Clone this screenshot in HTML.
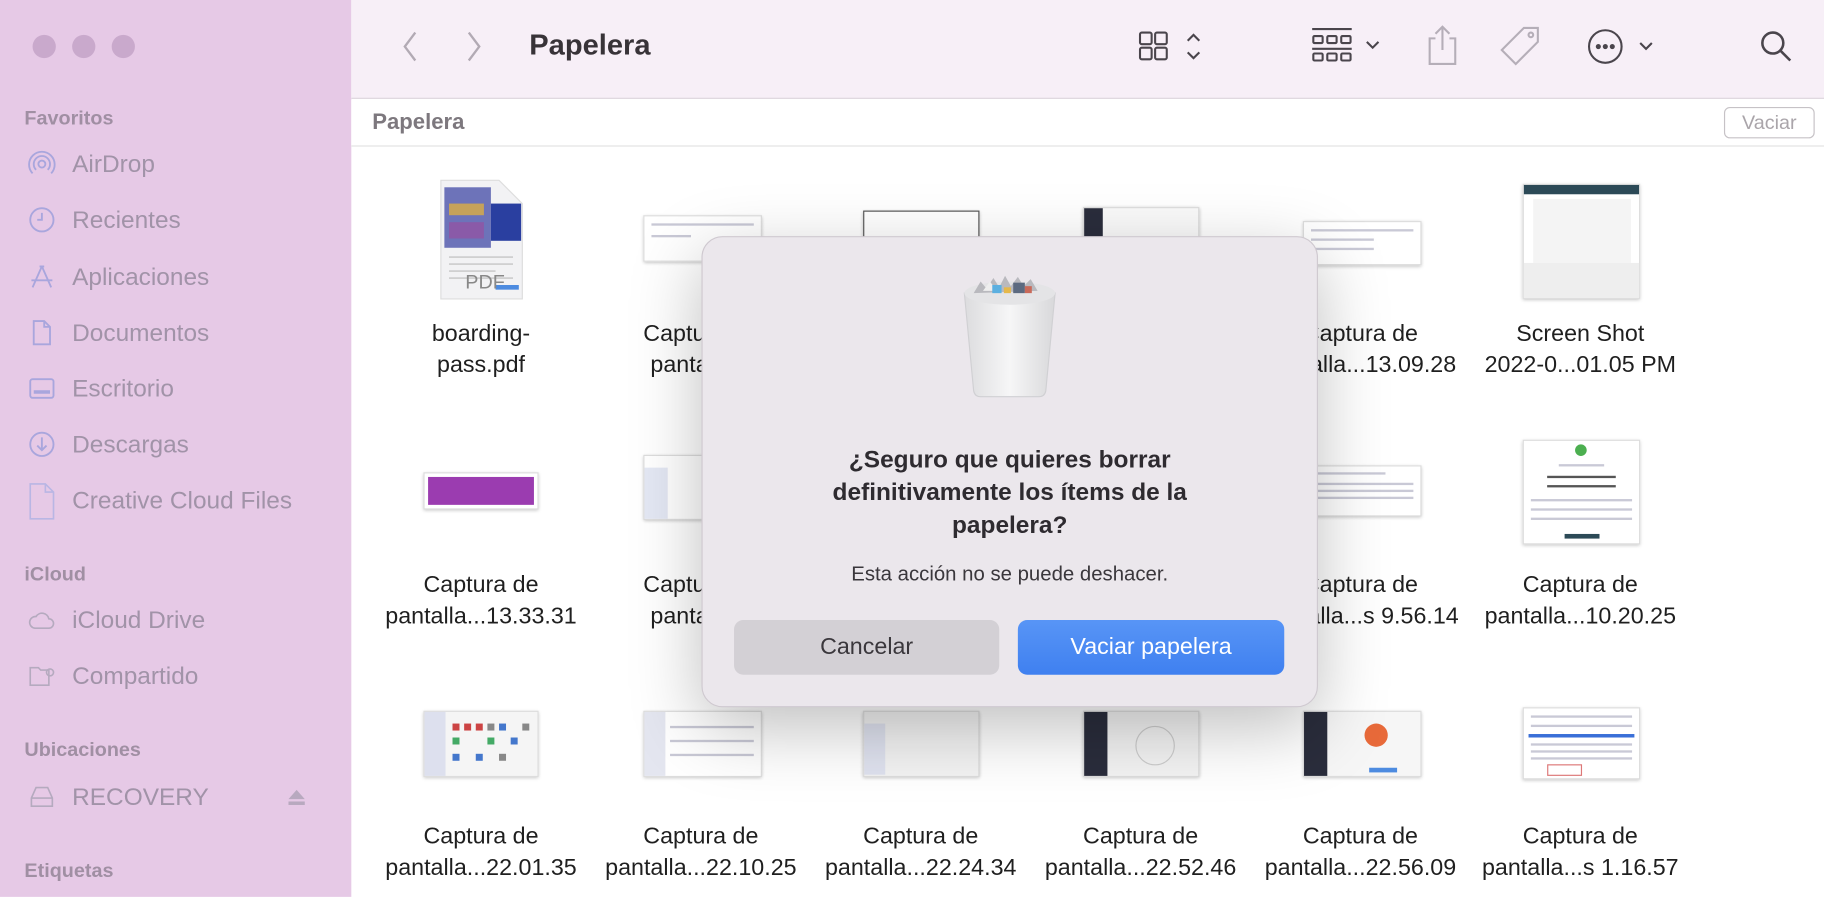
<!DOCTYPE html>
<html><head><meta charset="utf-8"><style>
*{margin:0;padding:0;box-sizing:border-box}
html,body{width:1824px;height:896px;overflow:hidden;background:#fff;font-family:"Liberation Sans",sans-serif}
#w{position:absolute;left:0;top:0;width:1568px;height:771px;transform:scale(1.16327);transform-origin:0 0}
.a{position:absolute}
#side{left:0;top:0;width:302px;height:771px;background:#e6c9e6}
.tl{width:20px;height:20px;border-radius:50%;background:#c9a9cc;top:30px}
.hd{left:21px;font-size:17px;font-weight:bold;color:#a08fa3}
.it{left:62px;font-size:21px;color:#a193a8;line-height:24px}
.ic{left:24px;width:24px;height:24px}
#tb{left:302px;top:0;width:1266px;height:85px;background:#f7eff7;border-bottom:1px solid #ddd5dd}
#pb{left:302px;top:86px;width:1266px;height:40px;background:#fff;border-bottom:1px solid #e2e2e2}
.lbl{font-size:20px;color:#1f1f1f;text-align:center;width:189px;line-height:27px}
.th{background:#fff;border:1px solid #ddd;box-shadow:0 1px 3px rgba(0,0,0,.25)}
.th i{position:absolute;left:6%;right:6%;height:2px;background:#c9c9d6}
</style></head><body><div id="w">
<div id="side" class="a">
<div class="a tl" style="left:28px"></div><div class="a tl" style="left:62px"></div><div class="a tl" style="left:96px"></div>
<div class="a hd" style="top:92px">Favoritos</div>
<svg class="a ic" style="top:129px" viewBox="0 0 24 24" fill="none" stroke="#a9a6dd" stroke-width="1.6"><circle cx="12" cy="12" r="3"/><path d="M7 17a7 7 0 1 1 10 0M4 20a11 11 0 1 1 16 0"/></svg>
<div class="a it" style="top:130px">AirDrop</div>
<svg class="a ic" style="top:177px" viewBox="0 0 24 24" fill="none" stroke="#a9a6dd" stroke-width="1.6"><circle cx="12" cy="12" r="10"/><path d="M12 6v6H8"/></svg>
<div class="a it" style="top:178px">Recientes</div>
<svg class="a ic" style="top:226px" viewBox="0 0 24 24" fill="none" stroke="#a9a6dd" stroke-width="1.6"><path d="M12 3L4 21M12 3l8 18M3 15h18M10 3h4"/></svg>
<div class="a it" style="top:227px">Aplicaciones</div>
<svg class="a ic" style="top:274px" viewBox="0 0 24 24" fill="none" stroke="#a9a6dd" stroke-width="1.6"><path d="M5 2h9l5 5v15H5zM14 2v5h5"/></svg>
<div class="a it" style="top:275px">Documentos</div>
<svg class="a ic" style="top:322px" viewBox="0 0 24 24" fill="none" stroke="#a9a6dd" stroke-width="1.6"><rect x="2" y="4" width="20" height="16" rx="2"/><path d="M5 15h14" stroke-width="3"/></svg>
<div class="a it" style="top:323px">Escritorio</div>
<svg class="a ic" style="top:370px" viewBox="0 0 24 24" fill="none" stroke="#a9a6dd" stroke-width="1.6"><circle cx="12" cy="12" r="10"/><path d="M12 6v11M8 13l4 4 4-4"/></svg>
<div class="a it" style="top:371px">Descargas</div>
<svg class="a ic" style="top:415px;height:32px" viewBox="0 0 24 32" fill="none" stroke="#b9b6e4" stroke-width="1.4"><path d="M2 1h13l7 7v23H2zM15 1v7h7"/></svg>
<div class="a it" style="top:419px">Creative Cloud Files</div>
<div class="a hd" style="top:484px">iCloud</div>
<svg class="a ic" style="top:521px" viewBox="0 0 24 24" fill="none" stroke="#b5aabf" stroke-width="1.4"><path d="M6 19h12a4 4 0 0 0 0-8 6 6 0 0 0-11-2A5 5 0 0 0 6 19z"/></svg>
<div class="a it" style="top:522px">iCloud Drive</div>
<svg class="a ic" style="top:569px" viewBox="0 0 24 24" fill="none" stroke="#b5aabf" stroke-width="1.4"><path d="M2 5h7l2 2h7v13H2z"/><circle cx="19" cy="9" r="3"/></svg>
<div class="a it" style="top:570px">Compartido</div>
<div class="a hd" style="top:635px">Ubicaciones</div>
<svg class="a ic" style="top:673px" viewBox="0 0 24 24" fill="none" stroke="#b5aabf" stroke-width="1.4"><path d="M3 13l4-9h10l4 9v7H3zM3 13h18"/></svg>
<div class="a it" style="top:674px">RECOVERY</div>
<svg class="a" style="left:247px;top:677px" width="16" height="16" viewBox="0 0 16 16" fill="#b8a9bf"><path d="M8 2l7 8H1z"/><rect x="1" y="12" width="14" height="3"/></svg>
<div class="a hd" style="top:739px">Etiquetas</div>
</div>

<div id="tb" class="a"></div>
<svg class="a" style="left:340px;top:26px" width="80" height="28" viewBox="0 0 80 28" fill="none" stroke="#b2aab4" stroke-width="2"><path d="M17 2L8 14l9 12M63 2l9 12-9 12"/></svg>
<div class="a" style="left:455px;top:25px;font-size:25px;font-weight:bold;color:#383338">Papelera</div>
<svg class="a" style="left:978px;top:26px" width="60" height="28" viewBox="0 0 60 28" fill="none" stroke="#4a454c" stroke-width="1.8"><rect x="2" y="2" width="10" height="10" rx="1.5"/><rect x="15" y="2" width="10" height="10" rx="1.5"/><rect x="2" y="15" width="10" height="10" rx="1.5"/><rect x="15" y="15" width="10" height="10" rx="1.5"/><path d="M43 9l5-5 5 5M43 19l5 5 5-5"/></svg>
<svg class="a" style="left:1126px;top:22px" width="70" height="34" viewBox="0 0 70 34" fill="none" stroke="#4a454c" stroke-width="1.8"><path d="M2 3h34"/><rect x="3" y="9" width="8" height="6" rx="1"/><rect x="15" y="9" width="8" height="6" rx="1"/><rect x="27" y="9" width="8" height="6" rx="1"/><path d="M2 20h34"/><rect x="3" y="24" width="8" height="6" rx="1"/><rect x="15" y="24" width="8" height="6" rx="1"/><rect x="27" y="24" width="8" height="6" rx="1"/><path d="M49 14l5 5 5-5"/></svg>
<svg class="a" style="left:1225px;top:21px" width="30" height="36" viewBox="0 0 30 36" fill="none" stroke="#b5aeb8" stroke-width="1.8"><path d="M9 12H4v22h22V12h-5M15 2v20M9 8l6-6 6 6"/></svg>
<svg class="a" style="left:1288px;top:21px" width="38" height="38" viewBox="0 0 38 38" fill="none" stroke="#b5aeb8" stroke-width="1.8"><path d="M22 3h12v12L15 34 3 22z"/><circle cx="28" cy="9" r="2"/></svg>
<svg class="a" style="left:1364px;top:24px" width="64" height="32" viewBox="0 0 64 32" fill="none" stroke="#4a454c" stroke-width="1.8"><circle cx="16" cy="16" r="14"/><circle cx="10" cy="16" r="1.3" fill="#4a454c"/><circle cx="16" cy="16" r="1.3" fill="#4a454c"/><circle cx="22" cy="16" r="1.3" fill="#4a454c"/><path d="M46 13l5 5 5-5"/></svg>
<svg class="a" style="left:1512px;top:25px" width="30" height="30" viewBox="0 0 30 30" fill="none" stroke="#4a454c" stroke-width="2.2"><circle cx="12" cy="12" r="9"/><path d="M19 19l8 8"/></svg>

<div id="pb" class="a"></div>
<div class="a" style="left:320px;top:95px;font-size:19px;font-weight:bold;color:#7d787e">Papelera</div>
<div class="a" style="left:1482px;top:92px;width:78px;height:27px;border:1px solid #c6c2c6;border-radius:5px;font-size:17px;color:#aaa5aa;text-align:center;line-height:25px">Vaciar</div>

<svg class="a" style="left:376px;top:153px" width="76" height="106" viewBox="0 0 76 106"><path d="M3 2h50l20 20v82H3z" fill="#f2f2f4" stroke="#ddd"/><rect x="6" y="8" width="40" height="52" fill="#6d73b9"/><rect x="46" y="22" width="26" height="32" fill="#2a3fa0"/><rect x="10" y="22" width="30" height="10" fill="#c6a25a"/><rect x="10" y="38" width="30" height="14" fill="#8a5aa8"/><g stroke="#bbb"><path d="M10 68h55M10 74h55M10 80h40M10 86h55"/></g><rect x="50" y="92" width="20" height="4" fill="#4d8be0"/><text x="24" y="95" font-family="Liberation Sans" font-size="17" fill="#888">PDF</text></svg>
<div class="a lbl" style="left:319px;top:274px">boarding-<br>pass.pdf</div>
<div class="a th" style="left:553px;top:185px;width:102px;height:40px"><i style="top:6px"></i><i style="top:16px;right:60%"></i></div>
<div class="a lbl" style="left:508px;top:274px">Captura de<br>pantalla...</div>
<div class="a th" style="left:742px;top:181px;width:100px;height:40px;border-color:#555"></div>
<div class="a th" style="left:931px;top:178px;width:100px;height:40px;background:#fafafa"><div class="a" style="left:0;top:0;width:16px;height:40px;background:#2a2d3c"></div></div>
<div class="a th" style="left:1120px;top:190px;width:102px;height:38px"><i style="top:6px"></i><i style="top:14px;right:40%"></i><i style="top:22px;right:40%"></i></div>
<div class="a lbl" style="left:1075px;top:274px">Captura de<br>pantalla...13.09.28</div>
<div class="a th" style="left:1309px;top:158px;width:101px;height:99px"><div class="a" style="left:0;top:0;width:100%;height:8px;background:#2c4a57"></div><div class="a" style="left:8px;top:12px;width:84px;height:55px;background:#f4f4f4"></div><div class="a" style="left:0;top:67px;width:100%;height:30px;background:#eee"></div></div>
<div class="a lbl" style="left:1264px;top:274px">Screen Shot<br>2022-0...01.05 PM</div>

<div class="a th" style="left:364px;top:406px;width:99px;height:32px;padding:3px"><div style="width:100%;height:100%;background:#9b3cb0"></div></div>
<div class="a lbl" style="left:319px;top:490px">Captura de<br>pantalla...13.33.31</div>
<div class="a th" style="left:553px;top:391px;width:102px;height:56px"><div class="a" style="left:0;top:10px;width:20px;height:44px;background:#e4e8f4"></div></div>
<div class="a lbl" style="left:508px;top:490px">Captura de<br>pantalla...</div>
<div class="a th" style="left:1120px;top:400px;width:102px;height:44px"><i style="top:5px;right:30%"></i><i style="top:14px"></i><i style="top:20px"></i><i style="top:26px"></i></div>
<div class="a lbl" style="left:1075px;top:490px">Captura de<br>pantalla...s 9.56.14</div>
<div class="a th" style="left:1309px;top:378px;width:101px;height:90px"><div class="a" style="left:44px;top:3px;width:10px;height:10px;border-radius:50%;background:#4caf50"></div><i style="top:20px;left:30%;right:30%"></i><i style="top:30px;left:20%;right:20%;background:#555"></i><i style="top:38px;left:20%;right:20%;background:#555"></i><i style="top:50px"></i><i style="top:58px"></i><i style="top:66px"></i><div class="a" style="left:35px;top:80px;width:30px;height:4px;background:#2c4a57"></div></div>
<div class="a lbl" style="left:1264px;top:490px">Captura de<br>pantalla...10.20.25</div>

<div class="a th" style="left:364px;top:611px;width:99px;height:57px;background:#f5f5f5"><div class="a" style="left:0;top:0;width:18px;height:55px;background:#dde0ee"></div><svg class="a" style="left:22px;top:8px" width="74" height="45"><g fill="#c44"><rect x="2" y="2" width="6" height="6"/><rect x="12" y="2" width="6" height="6"/><rect x="22" y="2" width="6" height="6"/></g><g fill="#4a6"><rect x="2" y="14" width="6" height="6"/><rect x="32" y="14" width="6" height="6"/></g><g fill="#47c"><rect x="2" y="28" width="6" height="6"/><rect x="22" y="28" width="6" height="6"/><rect x="42" y="2" width="6" height="6"/><rect x="52" y="14" width="6" height="6"/></g><g fill="#888"><rect x="32" y="2" width="6" height="6"/><rect x="62" y="2" width="6" height="6"/><rect x="42" y="28" width="6" height="6"/></g></svg></div>
<div class="a lbl" style="left:319px;top:706px">Captura de<br>pantalla...22.01.35</div>
<div class="a th" style="left:553px;top:611px;width:102px;height:57px"><div class="a" style="left:0;top:0;width:18px;height:55px;background:#e4e6f0"></div><i style="top:12px;left:22%"></i><i style="top:24px;left:22%"></i><i style="top:36px;left:22%"></i></div>
<div class="a lbl" style="left:508px;top:706px">Captura de<br>pantalla...22.10.25</div>
<div class="a th" style="left:742px;top:611px;width:100px;height:57px;background:#f3f3f3"><div class="a" style="left:0;top:10px;width:18px;height:44px;background:#dfe2ef"></div></div>
<div class="a lbl" style="left:697px;top:706px">Captura de<br>pantalla...22.24.34</div>
<div class="a th" style="left:931px;top:611px;width:100px;height:57px;background:#f3f3f3"><div class="a" style="left:0;top:0;width:20px;height:55px;background:#2a2d3c"></div><div class="a" style="left:44px;top:12px;width:34px;height:34px;border-radius:50%;border:1px solid #ccc"></div></div>
<div class="a lbl" style="left:886px;top:706px">Captura de<br>pantalla...22.52.46</div>
<div class="a th" style="left:1120px;top:611px;width:102px;height:57px;background:#f6f6f6"><div class="a" style="left:0;top:0;width:20px;height:55px;background:#2a2d3c"></div><div class="a" style="left:52px;top:10px;width:20px;height:20px;border-radius:50%;background:#e86a3a"></div><div class="a" style="left:56px;top:48px;width:24px;height:4px;background:#4d8be0"></div></div>
<div class="a lbl" style="left:1075px;top:706px">Captura de<br>pantalla...22.56.09</div>
<div class="a th" style="left:1309px;top:608px;width:101px;height:62px"><i style="top:6px"></i><div class="a" style="left:4px;top:22px;right:4px;height:3px;background:#3a6fd8"></div><i style="top:14px"></i><i style="top:30px"></i><i style="top:36px"></i><i style="top:42px"></i><div class="a" style="left:20px;top:48px;width:30px;height:10px;border:1px solid #d77"></div></div>
<div class="a lbl" style="left:1264px;top:706px">Captura de<br>pantalla...s 1.16.57</div>

<div class="a" style="left:603px;top:203px;width:530px;height:405px;background:#ebe7ec;border-radius:18px;border:1px solid #cfc9d0;box-shadow:0 18px 60px rgba(0,0,0,.25)"></div>
<svg class="a" style="left:825px;top:236px" width="86" height="106" viewBox="0 0 86 106"><defs><linearGradient id="g" x1="0" x2="1"><stop offset="0" stop-color="#dcdcde"/><stop offset=".5" stop-color="#f6f6f7"/><stop offset="1" stop-color="#d8d8da"/></linearGradient></defs><path d="M4 16h78l-8 84q-1 5-6 5H18q-5 0-6-5z" fill="url(#g)" stroke="#d0d0d3"/><ellipse cx="43" cy="16" rx="39" ry="10" fill="#e4e4e6"/><path d="M12 16l6-10 5 6 6-9 5 8 5-10 5 9 6-8 5 8 6-6 6 10z" fill="#b9b9be"/><path d="M20 14l6-8 6 8z" fill="#eee"/><rect x="28" y="9" width="8" height="7" fill="#5cb0e0"/><rect x="46" y="7" width="10" height="9" fill="#5c6a80"/><rect x="38" y="11" width="6" height="5" fill="#e5b84a"/><rect x="56" y="10" width="6" height="6" fill="#c96a5a"/></svg>
<div class="a" style="left:603px;top:382px;width:530px;text-align:center;font-size:21px;font-weight:bold;color:#2e2b30;line-height:28px">¿Seguro que quieres borrar<br>definitivamente los ítems de la<br>papelera?</div>
<div class="a" style="left:603px;top:483px;width:530px;text-align:center;font-size:17.5px;color:#3a373c">Esta acción no se puede deshacer.</div>
<div class="a" style="left:631px;top:533px;width:228px;height:47px;border-radius:8px;background:#d3d0d5;font-size:20px;color:#3a373c;text-align:center;line-height:47px">Cancelar</div>
<div class="a" style="left:875px;top:533px;width:229px;height:47px;border-radius:8px;background:linear-gradient(#5895f6,#3f80f0);font-size:20px;color:#fff;text-align:center;line-height:47px">Vaciar papelera</div>
</div></body></html>
